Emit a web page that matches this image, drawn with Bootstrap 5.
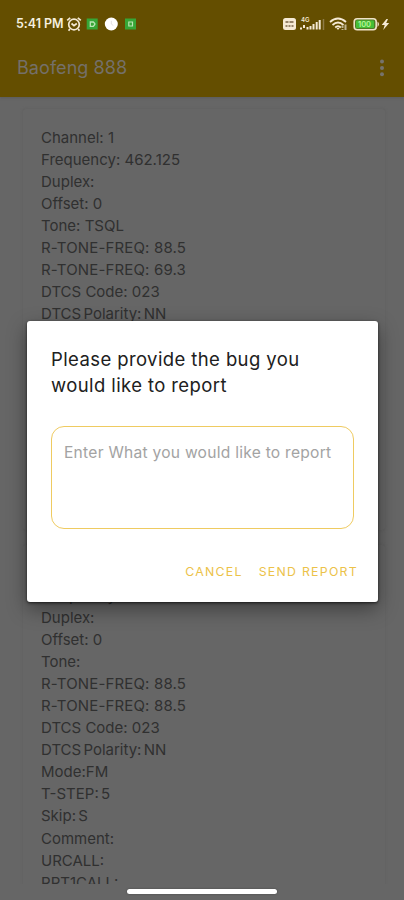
<!DOCTYPE html>
<html lang="en">
<head>
<meta charset="utf-8">
<meta name="viewport" content="width=device-width, initial-scale=1">
<title>Baofeng 888</title>
<link href="https://cdn.jsdelivr.net/npm/bootstrap@5.3.0/dist/css/bootstrap.min.css" rel="stylesheet">
<style>
body{font-family:Inter,Roboto,sans-serif;background:#666}
.screen{width:404px;height:900px;background:#666}
.appbar{height:97px;background:#644e00;box-shadow:0 1px 2px #5558}
.status{height:48px;padding:0 13px 0 16px;color:#f5efdf}
.clock{font-size:12.5px;font-weight:600;letter-spacing:-.05px;width:50px;line-height:16px}
.app-title{font-size:18px;line-height:24px;letter-spacing:.07px;color:#74706a}
.titlebar{height:40px;padding:0 19px 0 17px}
.feed{height:787px;padding:11.6px 19px 0 23px}
.channel{height:421px;margin-bottom:15px;padding:18px 18px 0;background:#666;border-radius:3px;box-shadow:0 0 3px #5f5f5f;font-size:15px;line-height:22.08px;color:#303030;white-space:nowrap}
.tone{letter-spacing:.16px}
.tight{word-spacing:-2px}
.home{width:150px;height:5px;margin-top:5px;background:#fff;box-shadow:0 0 2px #444}
.shade{left:27px;top:321px;width:351px;height:281px;padding:25px 24px 0;background:#fff;border-radius:3px;box-shadow:0 7px 20px #0006,0 1px 3px #000a;z-index:2}
.ask{font-size:18.5px;line-height:26px;letter-spacing:.4px;color:#202020;white-space:nowrap}
.report{height:103px;margin-top:28px;padding:13px 12px;border:1.5px solid #efcb61;border-radius:13px;font-size:15.6px;letter-spacing:.25px;line-height:25px;resize:none;background:#fff}
.report::placeholder{color:#a3a3a3;opacity:1}
.actions{margin:33px -4px 0 0;gap:16px}
.act{padding:0;border:0;border-radius:0;font-size:12.3px;line-height:20px;letter-spacing:1.28px;color:#ecc249;font-weight:400;white-space:nowrap}
svg{display:block;flex:none}
</style>
</head>
<body>
<div class="screen position-relative overflow-hidden mx-auto">
  <header class="appbar position-relative">
    <div class="status d-flex align-items-center justify-content-between">
      <div class="d-flex align-items-center">
        <span class="clock text-nowrap">5:41 PM</span>
        <svg width="16" height="16" viewBox="0 0 16 16" fill="none" stroke="#f5ead5" stroke-width="1.7"><circle cx="8" cy="8.5" r="5.3"/><path d="M1.2 4.400 4.200 1.800M11.800 1.800l3 2.600M3.800 13l-1.200 1.700M12.200 13l1.200 1.700M5.500 7.500 8 9.600l2.800-2.100"/></svg>
        <svg class="ms-1" width="14" height="14" viewBox="0 0 14 14"><path fill="#37a637" d="M.7 1.500h11v11H.7z"/><path d="M4.300 5h3l1.500 1.500v1L7.300 9.300h-3z" fill="none" stroke="#bce6b5" stroke-width="1.300"/></svg>
        <svg class="ms-1" width="16" height="16" viewBox="0 0 16 16"><circle cx="7.300" cy="8" r="6.500" fill="#fff"/><path d="M7.300 4.800V8l2 1.500" fill="none" stroke="#e3dfe2"/></svg>
        <svg class="ms-1" width="14" height="14" viewBox="0 0 14 14"><path fill="#37a637" d="M1 1.500h11v11H1z"/><path d="M4.800 5h3.700v4H4.800z" fill="none" stroke="#bce6b5" stroke-width="1.200"/></svg>
      </div>
      <svg width="110" height="18" viewBox="0 0 110 18">
        <rect x="2" y="3" width="13" height="12" rx="2.500" fill="#f5ead5"/>
        <path d="M4.500 7h3m1 0h4M4.500 11h2m1 0h2m1 0h2" stroke="#766147" stroke-width="1.700"/>
        <text x="20" y="6.500" font-size="6" font-weight="600" fill="#f5ead5">4G</text>
        <path d="M20 14.500v-2M23 13v-3M26.500 14.500v-2.500M29.500 14.500v-3.500M32.500 14.500v-5.500M35.700 14.500V7M38.700 14.500V5" stroke="#f5ead5" stroke-width="2"/>
        <path d="M42.500 15V4" stroke="#8d7b46" stroke-width="1.500"/>
        <path d="M49 7q8-7 16 0M51.500 10q5.500-5 11 0M54.200 12.500q2.800-2.500 5.600 0" fill="none" stroke="#f5ead5" stroke-width="1.800"/><path d="m55.500 13 1.500 2 1.500-2z" fill="#f5ead5"/>
        <path d="M61.500 13v-2.500M61.500 15v-1m3-4.500V15" stroke="#bdb28d" stroke-width="2"/>
        <rect x="73.200" y="3.700" width="22" height="11" rx="3" fill="#4e7b24" stroke="#efe2c8" stroke-width="1.600"/><rect x="75" y="5.500" width="18" height="7.500" rx="1" fill="#45bf35"/>
        <path d="M96.500 6.500q3 2.700 0 5.500z" fill="#efe2c8"/>
        <text x="77" y="12" font-size="7.500" font-weight="600" fill="#b9f29c">100</text>
        <path d="m105.500 4-4.800 6h3l-1.500 5 6-7h-3l1.800-4z" fill="#f5ead5"/>
      </svg>
    </div>
    <div class="titlebar d-flex align-items-center justify-content-between">
      <span class="app-title">Baofeng 888</span>
      <svg width="6" height="20" viewBox="0 0 6 20" fill="#76736c"><circle cx="3" cy="3.500" r="2"/><circle cx="3" cy="10" r="2"/><circle cx="3" cy="16.200" r="2"/></svg>
    </div>
  </header>

  <main class="feed overflow-hidden">
    <div class="channel">
      <div>Channel: 1</div><div>Frequency: 462.125</div><div>Duplex:</div><div>Offset: 0</div><div>Tone: TSQL</div>
      <div class="tone">R-TONE-FREQ: 88.5</div><div class="tone">R-TONE-FREQ: 69.3</div><div>DTCS Code: 023</div><div class="tight">DTCS Polarity: NN</div>
    </div>
    <div class="channel">
      <div>Channel: 2</div><div>Frequency: 462.225</div><div>Duplex:</div><div>Offset: 0</div><div>Tone:</div>
      <div class="tone">R-TONE-FREQ: 88.5</div><div class="tone">R-TONE-FREQ: 88.5</div><div>DTCS Code: 023</div><div class="tight">DTCS Polarity: NN</div>
      <div>Mode:FM</div><div class="tight">T-STEP: 5</div><div class="tight">Skip: S</div><div>Comment:</div><div>URCALL:</div><div>RPT1CALL:</div>
    </div>
  </main>
  <div class="home rounded-pill mx-auto"></div>

  <section class="shade position-absolute" role="dialog" aria-labelledby="ask">
    <h1 class="ask fw-normal mb-0" id="ask">Please provide the bug you<br>would like to report</h1>
    <textarea class="report form-control overflow-hidden" placeholder="Enter What you would like to report"></textarea>
    <div class="actions d-flex justify-content-end">
      <button class="act btn" type="button">CANCEL</button>
      <button class="act btn" type="button">SEND REPORT</button>
    </div>
  </section>
</div>
<script src="https://cdn.jsdelivr.net/npm/bootstrap@5.3.0/dist/js/bootstrap.bundle.min.js"></script>
</body>
</html>
